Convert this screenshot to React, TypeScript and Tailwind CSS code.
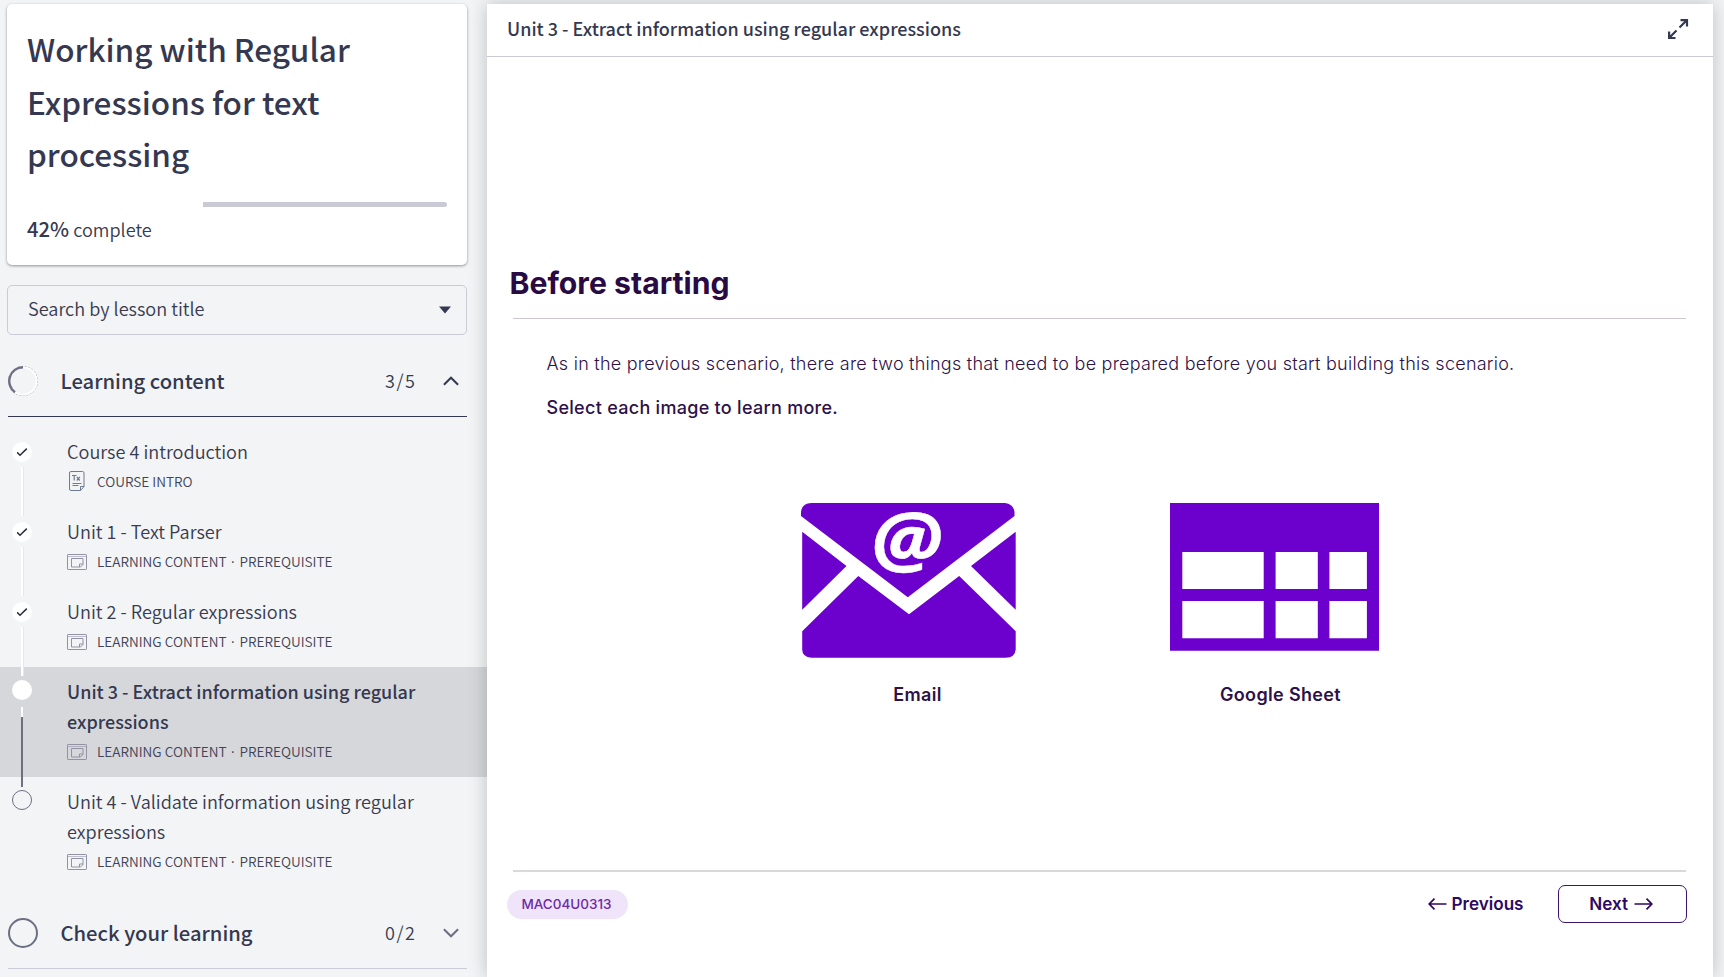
type Status = "done" | "current" | "todo";

interface Lesson {
  title: string;
  kind: "intro" | "content";
  status: Status;
}

const lessons: Lesson[] = [
  { title: "Course 4 introduction", kind: "intro", status: "done" },
  { title: "Unit 1 - Text Parser", kind: "content", status: "done" },
  { title: "Unit 2 - Regular expressions", kind: "content", status: "done" },
  { title: "Unit 3 - Extract information using regular expressions", kind: "content", status: "current" },
  { title: "Unit 4 - Validate information using regular expressions", kind: "content", status: "todo" },
];

function IntroIcon() {
  return (
    <svg width="20" height="20" viewBox="0 0 20 20" fill="none" stroke="#6f7b91" strokeWidth="1">
      <path d="M4 .5h11.500a1.500 1.500 0 0 1 1.500 1.500V15.500l-3.500 4H4a1.500 1.500 0 0 1-1.500-1.500V2A1.500 1.500 0 0 1 4 .5z" />
      <path d="M13.500 19.500V15.500h3.500M5.500 12.500h9M5.500 14.500h6" />
      <path d="M5 4.500h4.500M7.200 4.500v5M9.800 6l3 3.500M12.800 6l-3 3.500" strokeWidth="1.200" />
    </svg>
  );
}

function ContentIcon() {
  return (
    <svg className="mt-px" width="20" height="16" viewBox="0 0 20 16" fill="none" stroke="#9192a4" strokeWidth="1">
      <rect x=".5" y=".5" width="19" height="15" rx=".6" />
      <path d="M.5 2.500h19" strokeOpacity=".55" />
      <path d="M4.500 4.500h11.500v6l-2.500 2.500h-9z" />
      <path d="M12.500 13V10H16" />
    </svg>
  );
}

function StatusDot({ status }: { status: Status }) {
  if (status === "todo") return <span className="mt-[13px] size-5 rounded-full border border-[#6c6f83] bg-[#f2f4f5]" />;
  if (status === "current") return <span className="mt-[13px] size-5 rounded-full bg-white" />;
  return (
    <span className="mt-[15px] flex size-5 items-center justify-center rounded-full bg-white">
      <svg width="12" height="10" viewBox="0 0 12 10" fill="none" stroke="#2b2d3d" strokeWidth="1.500">
        <path d="M1.200 5.400l2.800 2.800 6.800-6.600" />
      </svg>
    </span>
  );
}

function LessonRow({ lesson }: { lesson: Lesson }) {
  const current = lesson.status === "current";
  return (
    <li className={current ? "relative flex bg-[#d6d7db]" : "relative flex"}>
      <div className="flex w-[67px] shrink-0 pl-3">
        <StatusDot status={lesson.status} />
      </div>
      {lesson.status === "done" && (
        <span className="absolute left-[21px] top-10 z-10 h-[49px] w-[2px] bg-white shadow-[1px_0_0_#e6e7ea]" />
      )}
      {current && (
        <span className="absolute left-[21px] top-10 z-10 flex h-20 w-[2px] flex-col">
          <span className="h-2.5 bg-white" />
          <span className="flex-1 bg-[#6c6f83]" />
        </span>
      )}
      <div className="flex-1 pb-[11px] pt-[9px] pr-12">
        <p
          className={
            current
              ? "text-[18px] font-medium leading-[30px] text-[#343850]"
              : "text-[18.120px] font-[350] leading-[30px] text-[#383b50]"
          }
        >
          {lesson.title}
        </p>
        <div className="flex h-[30px] items-center text-[13.600px] font-[350] leading-[30px] text-[#414459]">
          <span className="flex w-[30px]">{lesson.kind === "intro" ? <IntroIcon /> : <ContentIcon />}</span>
          {lesson.kind === "intro" ? (
            <span>COURSE INTRO</span>
          ) : (
            <>
              <span className="w-[129px] whitespace-nowrap">LEARNING CONTENT</span>
              <span className="w-[13.500px] pt-px text-center font-['Open_Sans',sans-serif] font-medium">·</span>
              <span>PREREQUISITE</span>
            </>
          )}
        </div>
      </div>
    </li>
  );
}

function SectionHeader({ title, count, open }: { title: string; count: string; open: boolean }) {
  return (
    <div
      className={
        open
          ? "ml-2 flex h-[72px] w-[459px] items-center border-b border-[#343850]"
          : "ml-2 flex h-[72px] w-[459px] items-center border-b border-[#cacbd6]"
      }
    >
      <svg className="shrink-0" width="30" height="30" viewBox="0 0 30 30" fill="none">
        {open ? (
          <>
            <circle cx="15" cy="15" r="14.600" stroke="#a3a4b1" strokeWidth=".9" strokeDasharray="2 1.500" />
            <circle cx="15" cy="15" r="13.600" stroke="#fff" strokeWidth="1.900" />
            <path d="M15 1.200A13.800 13.800 0 0 0 7 26.200" stroke="#6c6f83" strokeWidth="2.400" />
          </>
        ) : (
          <circle cx="15" cy="15" r="14" stroke="#6c6f83" strokeWidth="2" />
        )}
      </svg>
      <h2 className="ml-[22.500px] flex-1 text-[20.220px] font-medium leading-[30px] text-[#343850]">{title}</h2>
      <span className="w-[58px] pb-0.5 text-[18px] font-[350] leading-[30px] tracking-[1.500px] text-[#383b50]">{count}</span>
      <svg
        className="mr-2 shrink-0"
        width="16"
        height="10"
        viewBox="0 0 16 10"
        fill="none"
        stroke={open ? "#343850" : "#6c6f83"}
        strokeWidth="2"
      >
        <path d={open ? "M.9 8.800L8 1.700l7.100 7.100" : "M.9 1.200L8 8.300l7.100-7.100"} />
      </svg>
    </div>
  );
}

function Sidebar() {
  return (
    <aside className="flex w-[487px] shrink-0 flex-col pt-1 font-['Noto_Sans_CJK_SC',sans-serif]">
      <section className="ml-[7px] h-[261px] w-[460px] rounded-[5px] bg-white px-5 pt-[18px] shadow-[0_1px_3px_rgba(0,0,0,0.4)]">
        <h1 className="w-[360px] text-[31.500px] font-medium leading-[52.500px] text-[#343850]">
          Working with Regular Expressions for text processing
        </h1>
        <div className="mt-[22px] flex h-[5px] justify-end">
          <div className="w-[244px] rounded-r-full bg-[#c9cad5]" />
        </div>
        <p className="mt-1.5 whitespace-nowrap text-[18.100px] font-[350] leading-[30px] text-[#383b50]">
          <span className="text-[20.300px] font-medium text-[#343850]">42%</span> complete
        </p>
      </section>

      <div className="ml-[7px] mt-5 flex h-[50px] w-[460px] items-center justify-between rounded-[5px] border border-[#cacbd6] pl-5 pr-[15px]">
        <span className="pb-[5px] text-[18.130px] font-[350] leading-[30px] text-[#383b50]">Search by lesson title</span>
        <svg width="12" height="8" viewBox="0 0 12 8" fill="#343850">
          <path d="M0 .5h12L6 7.500z" />
        </svg>
      </div>

      <div className="mt-2.5">
        <SectionHeader title="Learning content" count="3/5" open />
        <ul className="pt-2.5">
          {lessons.map((l) => (
            <LessonRow key={l.title} lesson={l} />
          ))}
        </ul>
      </div>
      <div className="mt-2.5">
        <SectionHeader title="Check your learning" count="0/2" open={false} />
      </div>
    </aside>
  );
}

function EmailArt() {
  return (
    <svg className="overflow-visible" width="215" height="155" viewBox="0 0 215 155" fill="#6c00cc">
      <path d="M0 13V9Q1 0 10.500 0H204Q212.500 1 213.500 9V13L106.800 94.300Z" />
      <path d="M1.200 28.700L45.500 63L1.200 106.700Z" />
      <path d="M214.700 28.700L170 63L214.700 106.700Z" />
      <path d="M1.200 128.300L57.300 73L108 111.300L158.200 73L214.700 128.300V146.500Q214 154.700 204.500 154.700H10.500Q1.200 154 1.200 146.500Z" />
      <text
        x="95.700"
        y="62.600"
        transform="scale(1.100 1)"
        textAnchor="middle"
        fill="#fff"
        stroke="#fff"
        strokeWidth=".4"
        fontSize="74.500"
        className="font-['Open_Sans',sans-serif] font-bold italic"
      >
        @
      </text>
    </svg>
  );
}

function SheetArt() {
  return (
    <svg width="209" height="148" viewBox="0 0 209 148">
      <path fill="#6c00cc" d="M0 0H209V147.700H0Z" />
      <path
        fill="#fff"
        d="M12.300 49h81.400v37H12.300zM105.600 49h42.200v37h-42.200zM159.400 49h37.500v37h-37.500zM12.300 98h81.400v37.300H12.300zM105.600 98h42.200v37.300h-42.200zM159.400 98h37.500v37.300h-37.500z"
      />
    </svg>
  );
}

export default function App() {
  return (
    <div className="flex h-[977px] w-[1724px] overflow-hidden bg-[#f2f4f5]">
      <Sidebar />
      <main className="relative z-20 mt-1 flex w-[1226px] flex-col bg-white shadow-[0_0_18px_rgba(0,0,0,0.22)]">
        <header className="flex h-[53px] shrink-0 items-center justify-between border-b border-[#cacad4] pb-[5px] pl-5 pr-6">
          <h2 className="font-['Noto_Sans_CJK_SC',sans-serif] text-[18.010px] font-medium leading-[30px] text-[#343850]">
            Unit 3 - Extract information using regular expressions
          </h2>
          <svg className="mt-0.5" width="22" height="22" viewBox="0 0 22 22" fill="none" stroke="#343850" strokeWidth="2.200">
            <path d="M12.500 9.500L19.500 2.500M13.500 2.100H20V8.500M9.500 12.500L2.500 19.500M2.100 13.500V20H8.500" />
          </svg>
        </header>

        <article className="flex flex-1 flex-col pl-[26px] pr-[27px] font-[Inter,sans-serif] text-[#2d1148]">
          <h1 className="-ml-[3.500px] mt-[206px] text-[30.200px] font-bold leading-10 text-[#2a0a42]">Before starting</h1>
          <hr className="mt-[15px] border-[#cfc8d1]" />
          <div className="pl-[33.500px]">
            <p className="mt-[30px] whitespace-nowrap text-[18px] font-light leading-[30px] tracking-[0.245px] text-[#2d1148]">
              As in the previous scenario, there are two things that need to be prepared before you start building this
              scenario.
            </p>
            <p className="mt-[14px] text-[18px] font-medium leading-[30px] tracking-[0.290px]">
              Select each image to learn more.
            </p>
          </div>

          <div className="mt-20 flex pl-[288px]">
            <figure className="flex w-[232px] flex-col">
              <div className="h-[177px]">
                <EmailArt />
              </div>
              <figcaption className="pl-px text-center text-[18px] font-semibold leading-[30px] tracking-[0.350px]">
                Email
              </figcaption>
            </figure>
            <figure className="ml-[137px] flex w-[220px] flex-col">
              <div className="h-[177px]">
                <SheetArt />
              </div>
              <figcaption className="pl-px text-center text-[18px] font-semibold leading-[30px] tracking-[0.350px]">
                Google Sheet
              </figcaption>
            </figure>
          </div>

          <hr className="mt-[160px] border-t-2 border-[#dcd6dd]" />
          <footer className="-ml-1.5 -mr-[0.500px] mt-[13px] flex h-[38px] items-center text-[17.100px] font-semibold text-[#2f0862]">
            <span className="flex h-[29px] w-[121px] items-center justify-center rounded-full bg-[#f0e4fa] pr-0.5 text-[13.490px] font-medium text-[#6d2aa5]">
              MAC04U0313
            </span>
            <button className="ml-auto flex items-center gap-[5px]">
              <svg width="19" height="14" viewBox="0 0 19 14" fill="none" stroke="currentColor" strokeWidth="1.700">
                <path d="M18.500 7H1.200M6.500 1.600L1.200 7l5.300 5.400" />
              </svg>
              Previous
            </button>
            <button className="ml-[34px] flex h-[38px] w-[129px] items-center justify-center gap-[5.500px] rounded-[7px] border border-[#3d1468] pr-[2px]">
              Next
              <svg width="19" height="14" viewBox="0 0 19 14" fill="none" stroke="currentColor" strokeWidth="1.700">
                <path d="M.5 7H17.800M12.500 1.600L17.800 7l-5.300 5.400" />
              </svg>
            </button>
          </footer>
        </article>
      </main>
    </div>
  );
}
